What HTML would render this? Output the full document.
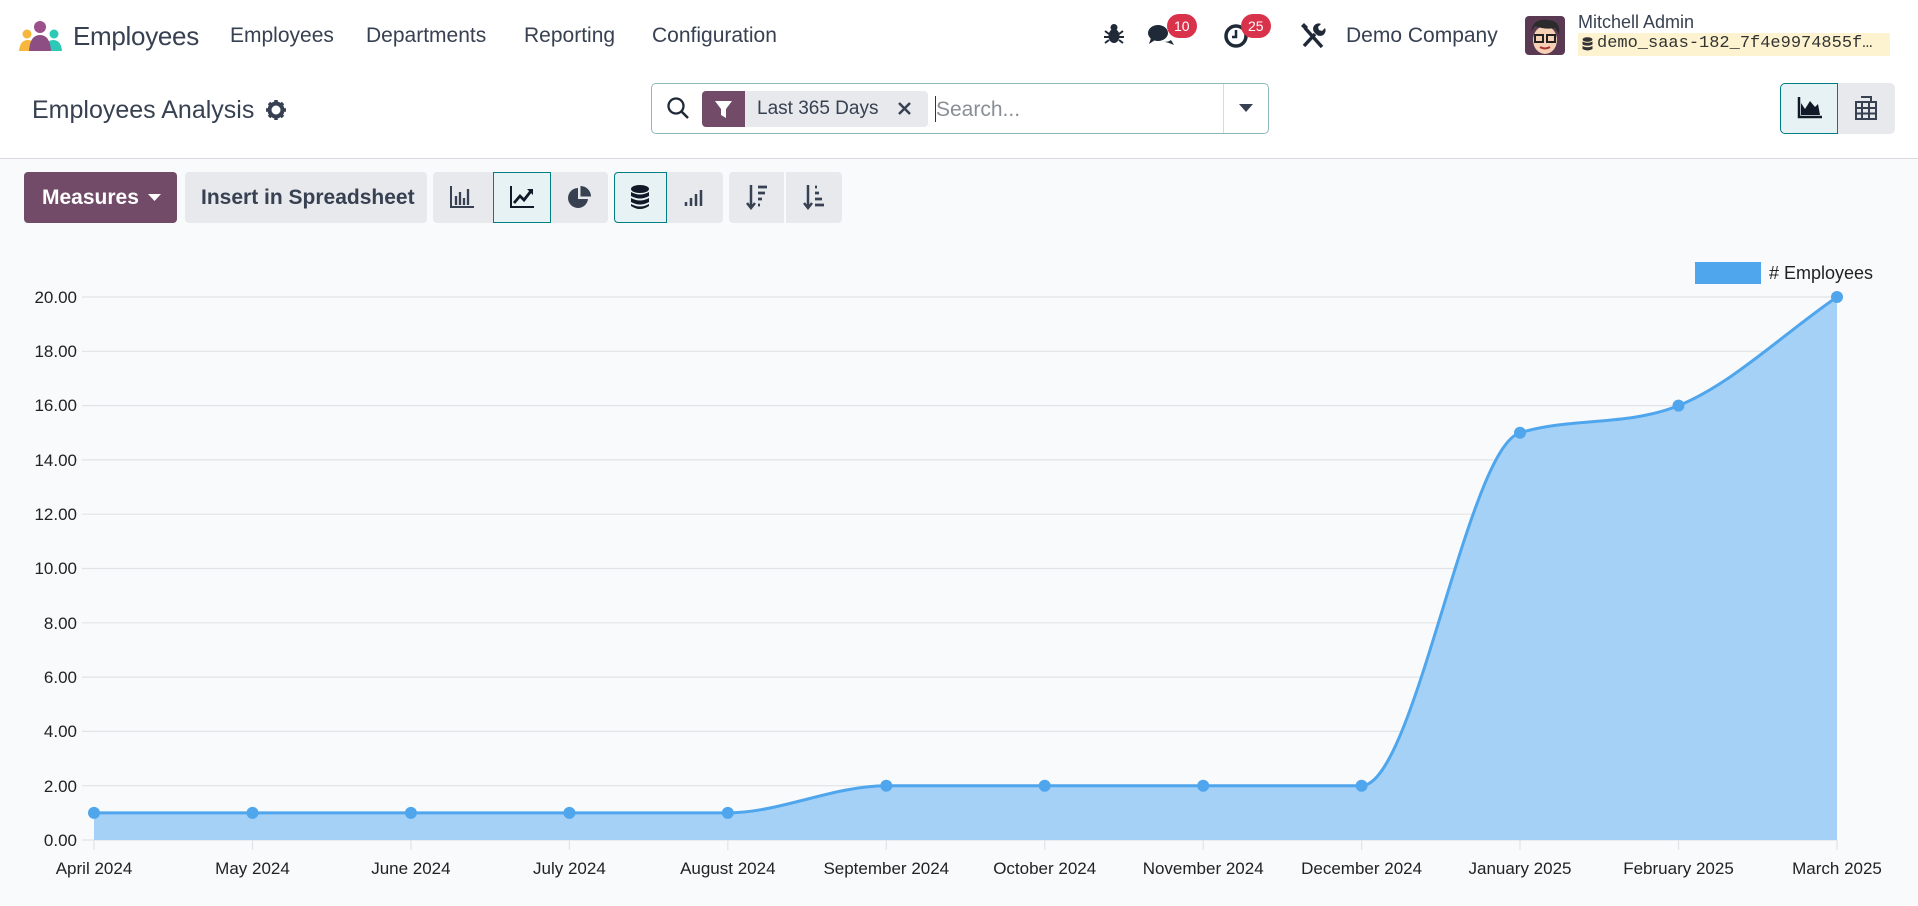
<!DOCTYPE html>
<html><head><meta charset="utf-8"><style>
*{box-sizing:border-box;margin:0;padding:0}
body{width:1918px;height:906px;overflow:hidden;background:#f9fafb;font-family:"Liberation Sans",sans-serif;color:#374151;position:relative}
.a{position:absolute}
.nav{left:0;top:0;width:1918px;height:73px;background:#fff}
.row2{left:0;top:73px;width:1918px;height:86px;background:#fff;border-bottom:1px solid #d8dadd}
.t{position:absolute;white-space:nowrap}
.btn{position:absolute;background:#e7e9ed;border-radius:4px}
.act{background:#e6f2f3;border:1px solid #017e84}
.badge{position:absolute;background:#d9334b;color:#fff;font-size:14px;border-radius:12px;height:24px;line-height:24px;padding:0 7px}
</style></head><body>
<div class="a nav"></div>
<div class="a row2"></div>
<svg class="a" style="left:19px;top:20px" width="43" height="32" viewBox="0 0 43 32">
<circle cx="21" cy="7" r="6" fill="#9b4f8b"/>
<circle cx="8" cy="14" r="4.5" fill="#f6b73c"/><circle cx="35" cy="14" r="4.5" fill="#2ec9b6"/>
<path d="M0 31 Q1 20 9 20 Q14 20 16 25 L16 31Z" fill="#f6b73c"/>
<path d="M27 25 Q29 20 34 20 Q42 20 43 31 L27 31Z" fill="#2ec9b6"/>
<path d="M10 31 Q11 15 21 15 Q31 15 32 31Z" fill="#8d4e84"/>
</svg>
<div class="t" style="left:73px;top:21px;font-size:26px;color:#374151;letter-spacing:-0.3px">Employees</div>
<div class="t" style="left:230px;top:24px;font-size:21px">Employees</div>
<div class="t" style="left:366px;top:24px;font-size:21px">Departments</div>
<div class="t" style="left:524px;top:24px;font-size:21px">Reporting</div>
<div class="t" style="left:652px;top:24px;font-size:21px">Configuration</div>
<svg class="a" style="left:1104px;top:23px" width="20" height="22" viewBox="0 0 20 22"><ellipse cx="10" cy="13" rx="5.5" ry="7" fill="#1f2937"/><circle cx="10" cy="4.5" r="3.5" fill="#1f2937"/><path d="M1 8l4 3M19 8l-4 3M0 14h5M20 14h-5M1 20l4-3M19 20l-4-3" stroke="#1f2937" stroke-width="2"/></svg>
<svg class="a" style="left:1147px;top:23px" width="28" height="26" viewBox="0 0 28 26"><ellipse cx="11" cy="10" rx="10" ry="8" fill="#1f2937"/><path d="M4 15l-2 6 6-4z" fill="#1f2937"/><path d="M15 18 Q20 20 24 17 L27 22 L22 20" fill="#1f2937"/></svg>
<div class="badge" style="left:1167px;top:14px">10</div>
<svg class="a" style="left:1223px;top:23px" width="26" height="26" viewBox="0 0 26 26"><circle cx="13" cy="13" r="10" fill="none" stroke="#1f2937" stroke-width="3.5"/><path d="M13 7v7h-4" stroke="#1f2937" stroke-width="2.5" fill="none"/></svg>
<div class="badge" style="left:1241px;top:14px">25</div>
<svg class="a" style="left:1300px;top:22px" width="26" height="27" viewBox="0 0 26 27"><path d="M5 6l17 19" stroke="#1f2937" stroke-width="3.5"/><path d="M1 4l3-3 4 4-3 3z" fill="#1f2937"/><path d="M4 24l11-12" stroke="#1f2937" stroke-width="3.5"/><path d="M14 10a5.5 5.5 0 0 1 7-8l-3 3 1 3 3 1 3-3a5.5 5.5 0 0 1-8 7z" fill="#1f2937"/></svg>
<div class="t" style="left:1346px;top:24px;font-size:21px">Demo Company</div>
<svg class="a" style="left:1525px;top:16px" width="40" height="39" viewBox="0 0 40 39"><rect width="40" height="39" rx="4" fill="#5a3a52"/><ellipse cx="20" cy="24" rx="12" ry="14" fill="#f5d0b5"/><path d="M6 16 Q8 2 22 4 Q36 4 34 18 L30 12 Q20 14 10 10Z" fill="#2b2b2b"/><rect x="10" y="19" width="8" height="7" fill="none" stroke="#222" stroke-width="2"/><rect x="22" y="19" width="8" height="7" fill="none" stroke="#222" stroke-width="2"/><path d="M15 31 Q20 34 25 31" stroke="#a33" stroke-width="2" fill="none"/></svg>
<div class="t" style="left:1578px;top:12px;font-size:18px">Mitchell Admin</div>
<div class="a" style="left:1578px;top:33px;width:312px;height:23px;background:#fdf3d0"></div>
<svg class="a" style="left:1582px;top:37px" width="11" height="15" viewBox="0 0 11 15"><ellipse cx="5.5" cy="2.5" rx="5" ry="2.3" fill="#333"/><path d="M0.5 4.5v3Q5.5 10 10.5 7.5v-3Q5.5 7 0.5 4.5zM0.5 9v3Q5.5 15 10.5 12v-3Q5.5 11.5 0.5 9z" fill="#333"/></svg>
<div class="t" style="left:1597px;top:34px;font-size:17px;font-family:'Liberation Mono',monospace;color:#333">demo_saas-182_7f4e9974855f…</div>
<div class="t" style="left:32px;top:96px;font-size:25px">Employees Analysis</div>
<svg class="a" style="left:266px;top:100px" width="20" height="20" viewBox="0 0 20 20"><circle cx="10" cy="10" r="6.5" fill="none" stroke="#374151" stroke-width="4"/><path d="M10 0v5M10 15v5M0 10h5M15 10h5M3 3l3.5 3.5M13.5 13.5L17 17M17 3l-3.5 3.5M6.5 13.5L3 17" stroke="#374151" stroke-width="3.5"/></svg>
<div class="a" style="left:651px;top:83px;width:618px;height:51px;border:1px solid #8fb8bb;border-radius:5px;background:#fff"></div>
<svg class="a" style="left:666px;top:96px" width="24" height="24" viewBox="0 0 24 24"><circle cx="10" cy="10" r="7.5" fill="none" stroke="#1f2937" stroke-width="2.3"/><path d="M15.5 15.5L22 22" stroke="#1f2937" stroke-width="2.5"/></svg>
<div class="a" style="left:702px;top:91px;width:226px;height:36px;background:#e7e9ed;border-radius:4px"></div>
<div class="a" style="left:702px;top:91px;width:43px;height:36px;background:#714b67;border-radius:4px 0 0 4px"></div>
<svg class="a" style="left:714px;top:100px" width="19" height="19" viewBox="0 0 19 19"><path d="M1 1h17l-6 8v9l-5-3V9z" fill="#fff"/></svg>
<div class="t" style="left:757px;top:98px;font-size:19px">Last 365 Days</div>
<svg class="a" style="left:897px;top:101px" width="15" height="15" viewBox="0 0 15 15"><path d="M2 2l11 11M13 2L2 13" stroke="#374151" stroke-width="2.5"/></svg>
<div class="a" style="left:935px;top:96px;width:1px;height:26px;background:#333"></div>
<div class="t" style="left:936px;top:98px;font-size:21px;color:#8a8f96">Search...</div>
<div class="a" style="left:1223px;top:84px;width:1px;height:49px;background:#d8dadd"></div>
<svg class="a" style="left:1239px;top:104px" width="14" height="9" viewBox="0 0 14 9"><path d="M0 0h14L7 8z" fill="#374151"/></svg>
<div class="btn act" style="left:1780px;top:83px;width:58px;height:51px;border-radius:5px 0 0 5px"></div>
<div class="btn" style="left:1838px;top:83px;width:57px;height:51px;border-radius:0 5px 5px 0"></div>
<svg class="a" style="left:1797px;top:97px" width="25" height="22" viewBox="0 0 25 22"><path d="M2 0v20h23" stroke="#111827" stroke-width="2.5" fill="none"/><path d="M4 18V6l4 6 5-8 5 6 3-3 2 11z" fill="#111827"/></svg>
<svg class="a" style="left:1855px;top:96px" width="22" height="24" viewBox="0 0 22 24"><path d="M6 1h10v5M1 6h20v17H1zM1 12h20M1 17.5h20M7 6v17M14 6v17" stroke="#374151" stroke-width="2" fill="none"/></svg>
<div class="btn" style="left:24px;top:172px;width:153px;height:51px;background:#714b67"></div>
<div class="t" style="left:42px;top:186px;font-size:21px;font-weight:bold;color:#fff">Measures</div>
<svg class="a" style="left:148px;top:194px" width="13" height="8" viewBox="0 0 13 8"><path d="M0 0h13L6.5 7z" fill="#fff"/></svg>
<div class="btn" style="left:185px;top:172px;width:242px;height:51px"></div>
<div class="t" style="left:201px;top:186px;font-size:21px;font-weight:bold;color:#374151">Insert in Spreadsheet</div>
<div class="btn" style="left:433px;top:172px;width:175px;height:51px"></div>
<div class="btn act" style="left:493px;top:172px;width:58px;height:51px;border-radius:0"></div>
<svg class="a" style="left:450px;top:186px" width="24" height="22" viewBox="0 0 24 22"><path d="M1 0v21h23" stroke="#374151" stroke-width="2" fill="none"/><path d="M6 10v9M10 6v13M14 12v7M18 3v16" stroke="#374151" stroke-width="2.3"/></svg>
<svg class="a" style="left:510px;top:186px" width="24" height="22" viewBox="0 0 24 22"><path d="M1 0v21h23" stroke="#111827" stroke-width="2" fill="none"/><path d="M4 17l6-7 4 4 7-9" stroke="#111827" stroke-width="2.8" fill="none"/><path d="M17 3h6v6z" fill="#111827"/></svg>
<svg class="a" style="left:568px;top:185px" width="24" height="24" viewBox="0 0 24 24"><path d="M10 3a10 10 0 1 0 10 11H10z" fill="#374151"/><path d="M12.5 1v10.5H23A10.5 10.5 0 0 0 12.5 1z" fill="#374151"/></svg>
<div class="btn" style="left:614px;top:172px;width:109px;height:51px"></div>
<div class="btn act" style="left:614px;top:172px;width:53px;height:51px;border-radius:4px 0 0 4px"></div>
<svg class="a" style="left:630px;top:185px" width="20" height="25" viewBox="0 0 20 25"><ellipse cx="10" cy="4" rx="9" ry="4" fill="#111827"/><path d="M1 7v4Q10 16 19 11V7Q10 12 1 7zM1 13v4Q10 22 19 17v-4Q10 18 1 13zM1 19v2Q10 27 19 21v-2Q10 24 1 19z" fill="#111827"/></svg>
<svg class="a" style="left:684px;top:187px" width="22" height="20" viewBox="0 0 22 20"><path d="M2 15v4M7 11v8M12 7v12M17 3v16" stroke="#374151" stroke-width="2.5"/></svg>
<div class="btn" style="left:729px;top:172px;width:113px;height:51px"></div>
<div class="a" style="left:784px;top:172px;width:2px;height:51px;background:#f9fafb"></div>
<svg class="a" style="left:746px;top:184px" width="22" height="26" viewBox="0 0 22 26"><path d="M5 1v22M1 19l4 5 4-5" stroke="#374151" stroke-width="2.5" fill="none"/><path d="M12 3h9M12 9h7M12 15h4M12 21h2" stroke="#374151" stroke-width="2.8"/></svg>
<svg class="a" style="left:803px;top:184px" width="22" height="26" viewBox="0 0 22 26"><path d="M5 1v22M1 19l4 5 4-5" stroke="#374151" stroke-width="2.5" fill="none"/><path d="M12 3h2M12 9h4M12 15h7M12 21h9" stroke="#374151" stroke-width="2.8"/></svg>
<svg class="a" style="left:0;top:250px" width="1918" height="656" viewBox="0 250 1918 656" font-family="Liberation Sans, sans-serif" font-size="17" fill="#222">
<g stroke="#e1e3e6" stroke-width="1.2">
<line x1="82" x2="1837" y1="297" y2="297"/><line x1="82" x2="1837" y1="351.3" y2="351.3"/><line x1="82" x2="1837" y1="405.6" y2="405.6"/><line x1="82" x2="1837" y1="459.9" y2="459.9"/><line x1="82" x2="1837" y1="514.2" y2="514.2"/><line x1="82" x2="1837" y1="568.5" y2="568.5"/><line x1="82" x2="1837" y1="622.8" y2="622.8"/><line x1="82" x2="1837" y1="677.1" y2="677.1"/><line x1="82" x2="1837" y1="731.4" y2="731.4"/><line x1="82" x2="1837" y1="785.7" y2="785.7"/><line x1="82" x2="1837" y1="840" y2="840"/>
<line x1="94" x2="94" y1="840" y2="850"/><line x1="252.5" x2="252.5" y1="840" y2="850"/><line x1="410.9" x2="410.9" y1="840" y2="850"/><line x1="569.4" x2="569.4" y1="840" y2="850"/><line x1="727.8" x2="727.8" y1="840" y2="850"/><line x1="886.3" x2="886.3" y1="840" y2="850"/><line x1="1044.7" x2="1044.7" y1="840" y2="850"/><line x1="1203.2" x2="1203.2" y1="840" y2="850"/><line x1="1361.6" x2="1361.6" y1="840" y2="850"/><line x1="1520" x2="1520" y1="840" y2="850"/><line x1="1678.5" x2="1678.5" y1="840" y2="850"/><line x1="1837" x2="1837" y1="840" y2="850"/>
</g>
<g text-anchor="end">
<text x="77" y="303">20.00</text><text x="77" y="357">18.00</text><text x="77" y="411">16.00</text><text x="77" y="466">14.00</text><text x="77" y="520">12.00</text><text x="77" y="574">10.00</text><text x="77" y="629">8.00</text><text x="77" y="683">6.00</text><text x="77" y="737">4.00</text><text x="77" y="792">2.00</text><text x="77" y="846">0.00</text>
</g>
<g text-anchor="middle">
<text x="94" y="874">April 2024</text><text x="252.5" y="874">May 2024</text><text x="410.9" y="874">June 2024</text><text x="569.4" y="874">July 2024</text><text x="727.8" y="874">August 2024</text><text x="886.3" y="874">September 2024</text><text x="1044.7" y="874">October 2024</text><text x="1203.2" y="874">November 2024</text><text x="1361.6" y="874">December 2024</text><text x="1520" y="874">January 2025</text><text x="1678.5" y="874">February 2025</text><text x="1837" y="874">March 2025</text>
</g>
<path d="M94 812.85 L727.8 812.85 C780 812.85 833 785.7 886.3 785.7 L1361.6 785.7 C1414.4 785.7 1467.2 448.6 1520 432.75 C1572.8 416.9 1625.7 426.7 1678.5 405.6 C1731.3 384.5 1784.2 333.2 1837 297 L1837 840 L94 840Z" fill="#a5d1f6"/>
<path d="M94 812.85 L727.8 812.85 C780 812.85 833 785.7 886.3 785.7 L1361.6 785.7 C1414.4 785.7 1467.2 448.6 1520 432.75 C1572.8 416.9 1625.7 426.7 1678.5 405.6 C1731.3 384.5 1784.2 333.2 1837 297" fill="none" stroke="#4fa6ed" stroke-width="3"/>
<g fill="#4fa6ed">
<circle cx="94" cy="812.85" r="6"/><circle cx="252.5" cy="812.85" r="6"/><circle cx="410.9" cy="812.85" r="6"/><circle cx="569.4" cy="812.85" r="6"/><circle cx="727.8" cy="812.85" r="6"/><circle cx="886.3" cy="785.7" r="6"/><circle cx="1044.7" cy="785.7" r="6"/><circle cx="1203.2" cy="785.7" r="6"/><circle cx="1361.6" cy="785.7" r="6"/><circle cx="1520" cy="432.75" r="6"/><circle cx="1678.5" cy="405.6" r="6"/><circle cx="1837" cy="297" r="6"/>
</g>
<rect x="1695" y="262" width="66" height="22" fill="#4fa6ed"/>
<text x="1769" y="279" font-size="18">#&#160;Employees</text>
</svg>
</body></html>
